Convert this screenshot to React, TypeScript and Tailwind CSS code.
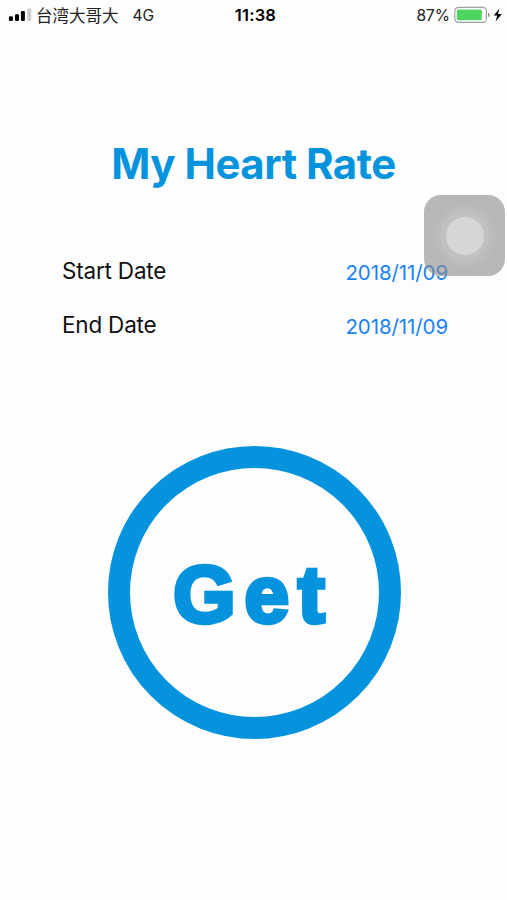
const dates = [
  { label: 'Start Date', value: '2018/11/09' },
  { label: 'End Date', value: '2018/11/09' },
]

function SignalIcon() {
  return (
    <svg width="24" height="14" viewBox="0 0 24 14">
      <rect x="0.9" y="8.2" width="4" height="4.8" rx="1.2" fill="#000" />
      <rect x="7" y="6.2" width="4" height="6.8" rx="1.2" fill="#000" />
      <rect x="12.9" y="3" width="4" height="10" rx="1.2" fill="#000" />
      <rect x="19.2" y="0.5" width="4" height="12.5" rx="1" fill="#cbcbcb" />
    </svg>
  )
}

function BatteryIcon() {
  return (
    <svg width="50" height="18" viewBox="0 0 50 18">
      <rect x="0.8" y="1.4" width="31.6" height="15" rx="3.8" fill="#fff" stroke="#a0a0a0" strokeWidth="1.2" />
      <rect x="2.8" y="3.5" width="25" height="10.8" rx="1.5" fill="#4cd55f" />
      <path d="M34 6.800v4.400c1-.3 1.500-1.200 1.500-2.200s-.5-1.900-1.500-2.200z" fill="#8e8e8e" />
      <path d="M45.400 2.600L39.800 9.400h3.400l-1.600 6 6.200-7.400h-3.800z" fill="#000" />
    </svg>
  )
}

function StatusBar() {
  return (
    <header className="grid h-[30px] grid-cols-[1fr_auto_1fr] items-center pl-2 pr-[3px] text-[15.5px] text-[#222]">
      <div className="flex items-center">
        <SignalIcon />
        <span className="ml-1 pt-0.5 text-[16.5px] leading-none">台湾大哥大</span>
        <span className="ml-3.5 pt-px leading-none">4G</span>
      </div>
      <span className="pr-px text-[16.5px] font-semibold leading-none tracking-[0.2px] text-black">11:38</span>
      <div className="flex items-center justify-end">
        <span className="mr-1 pt-px leading-none">87%</span>
        <BatteryIcon />
      </div>
    </header>
  )
}

function AssistiveTouch() {
  return (
    <div className="absolute left-[424px] top-[195px] flex h-[81px] w-[81px] items-center justify-center rounded-[17px] bg-[#8a8a8a]/60">
      <div className="flex h-[60px] w-[60px] items-center justify-center rounded-full bg-white/5">
        <div className="flex h-[49px] w-[49px] items-center justify-center rounded-full bg-white/8">
          <div className="h-[38px] w-[38px] rounded-full bg-white/35" />
        </div>
      </div>
    </div>
  )
}

export default function App() {
  return (
    <div className="relative h-[900px] w-[507px] overflow-hidden bg-[#fdfdfd] font-[Inter,'Noto_Sans_CJK_TC',sans-serif]">
      <StatusBar />
      <main className="flex flex-col items-center">
        <h1 className="mt-[109px] text-[42px] font-bold leading-[50px] tracking-[-0.5px] text-[#0693de]">My Heart Rate</h1>

        <div className="mt-[55px] flex w-full flex-col pl-[62px] pr-[59px]">
          {dates.map((item) => (
            <div key={item.label} className="flex h-[54px] items-center justify-between">
              <span className="pb-px text-[22.5px] tracking-[-0.2px] text-[#111]">{item.label}</span>
              <span className="pt-1 text-[20.5px] tracking-[-0.1px] text-[#1a82f7]">{item.value}</span>
            </div>
          ))}
        </div>

        <button className="ml-0.5 mt-[94px] flex h-[293px] w-[293px] items-center justify-center rounded-full border-[22px] border-[#0693de]">
          <span className="pr-0.5 pt-1 font-['Liberation_Sans',sans-serif] text-[80px] font-bold leading-none tracking-[9px] text-[#0693de] [-webkit-text-stroke:4.5px_#0693de]">
            Get
          </span>
        </button>
      </main>
      <AssistiveTouch />
    </div>
  )
}
